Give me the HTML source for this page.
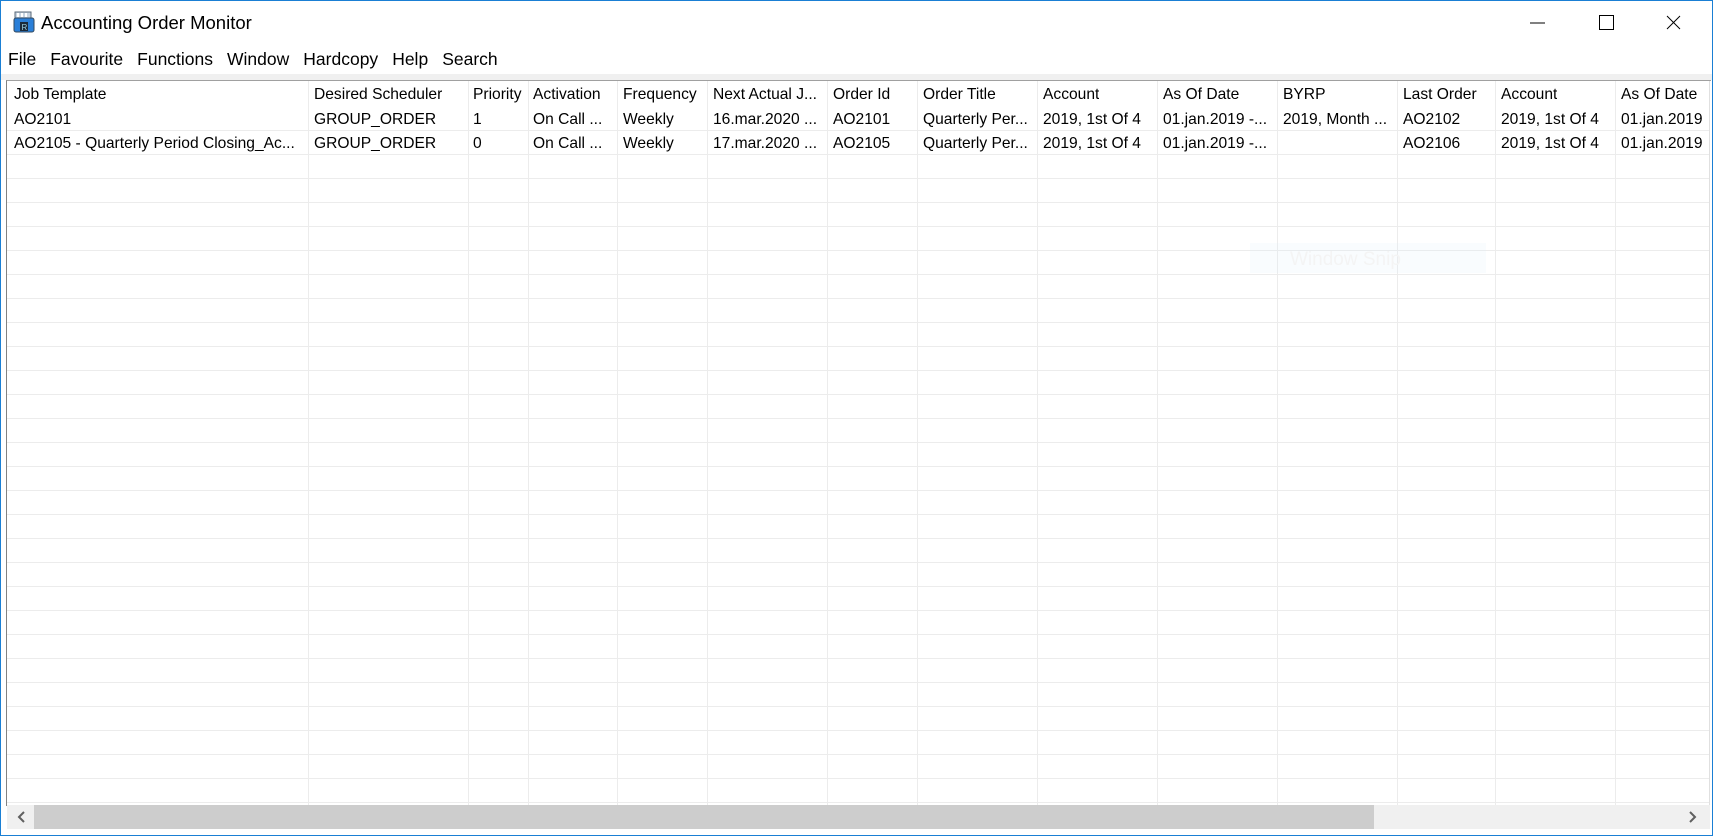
<!DOCTYPE html><html><head><style>
*{margin:0;padding:0;box-sizing:border-box}
body{width:1713px;height:836px;background:#fff;font-family:"Liberation Sans",Arial,sans-serif;position:relative;overflow:hidden;color:#000}
.win{position:absolute;left:0;top:0;width:1713px;height:836px;border:1px solid #1a7fd4}
.title{position:absolute;left:41px;top:12px;font-size:18.5px}
.menu{position:absolute;left:8px;top:49px;font-size:17.5px}
.menu span{margin-right:14px}
.band{position:absolute;left:1px;top:74px;width:1711px;height:6px;background:#f0f0f0}
.tbl{position:absolute;left:6px;top:80px;width:1705px;height:726px;border-left:1px solid #828282;border-top:1px solid #a0a0a0}
.rows{position:absolute;left:7px;top:107px;width:1703px;height:698px;background:repeating-linear-gradient(to bottom,#fff 0,#fff 23px,#ececec 23px,#ececec 24px)}
.vl{position:absolute;top:81px;height:724px;width:1px;background:#ececec}
.c{position:absolute;font-size:15.6px;white-space:nowrap}
.sb{position:absolute;left:7px;top:805px;width:1703px;height:24px;background:#f0f0f0}
.thumb{position:absolute;left:34px;top:805px;width:1340px;height:24px;background:#cdcdcd}
</style></head><body>
<div class="win"></div>
<svg style="position:absolute;left:12px;top:10px" width="24" height="24" viewBox="0 0 24 24">
<rect x="3" y="2" width="16" height="8" fill="#c8d4e0" stroke="#5a6a7a"/>
<rect x="5" y="3" width="2" height="4" fill="#fff"/><rect x="9" y="3" width="2" height="4" fill="#fff"/><rect x="13" y="3" width="2" height="4" fill="#fff"/>
<rect x="2" y="8" width="20" height="14" rx="2" fill="#2a7fd8" stroke="#34495e"/>
<rect x="8" y="12" width="8" height="9" fill="#1b2a3a"/><text x="9.5" y="20" font-size="8" fill="#9cd" font-family="Liberation Sans">R</text></svg>
<div class="title">Accounting Order Monitor</div>
<svg style="position:absolute;left:1520px;top:10px" width="180" height="26">
<line x1="10" y1="13" x2="25" y2="13" stroke="#000"/>
<rect x="79.5" y="5.5" width="14" height="14" fill="none" stroke="#000"/>
<line x1="147" y1="6" x2="160" y2="19" stroke="#000"/><line x1="160" y1="6" x2="147" y2="19" stroke="#000"/></svg>
<div class="menu"><span>File</span><span>Favourite</span><span>Functions</span><span>Window</span><span>Hardcopy</span><span>Help</span><span>Search</span></div>
<div class="band"></div>
<div class="tbl"></div>
<div class="rows"></div>
<div class="vl" style="left:308px"></div><div class="vl" style="left:468px"></div><div class="vl" style="left:528px"></div><div class="vl" style="left:617px"></div><div class="vl" style="left:707px"></div><div class="vl" style="left:827px"></div><div class="vl" style="left:917px"></div><div class="vl" style="left:1037px"></div><div class="vl" style="left:1157px"></div><div class="vl" style="left:1277px"></div><div class="vl" style="left:1397px"></div><div class="vl" style="left:1495px"></div><div class="vl" style="left:1615px"></div>
<div style="position:absolute;left:1709px;top:81px;width:1px;height:724px;background:#e0e0e0"></div>
<div style="position:absolute;left:1250px;top:243px;width:236px;height:30px;background:rgba(225,238,252,.2)"></div>
<div class="c" style="left:1290px;top:249px;font-size:19px;color:#f4f4f4">Window Snip</div>
<div id="cells"></div>
<script>
var xs=[14,314,473,533,623,713,833,923,1043,1163,1283,1403,1501,1621];
var rows=[["Job Template","Desired Scheduler","Priority","Activation","Frequency","Next Actual J...","Order Id","Order Title","Account","As Of Date","BYRP","Last Order","Account","As Of Date"],
["AO2101","GROUP_ORDER","1","On Call ...","Weekly","16.mar.2020 ...","AO2101","Quarterly Per...","2019, 1st Of 4","01.jan.2019 -...","2019, Month ...","AO2102","2019, 1st Of 4","01.jan.2019"],
["AO2105 - Quarterly Period Closing_Ac...","GROUP_ORDER","0","On Call ...","Weekly","17.mar.2020 ...","AO2105","Quarterly Per...","2019, 1st Of 4","01.jan.2019 -...","","AO2106","2019, 1st Of 4","01.jan.2019"]];
var ys=[86,111,135],h="";
rows.forEach(function(r,i){r.forEach(function(t,j){h+='<div class="c" style="left:'+xs[j]+'px;top:'+ys[i]+'px;overflow:hidden;max-width:'+((j<13?xs[j+1]:1709)-xs[j]-2)+'px">'+t+'</div>'})});
document.getElementById('cells').innerHTML=h;
</script>
<div class="sb"></div><div class="thumb"></div>
<svg style="position:absolute;left:14px;top:809px" width="16" height="16"><path d="M10 3 L5 8 L10 13" fill="none" stroke="#606060" stroke-width="2"/></svg>
<svg style="position:absolute;left:1684px;top:809px" width="16" height="16"><path d="M6 3 L11 8 L6 13" fill="none" stroke="#606060" stroke-width="2"/></svg>
</body></html>
